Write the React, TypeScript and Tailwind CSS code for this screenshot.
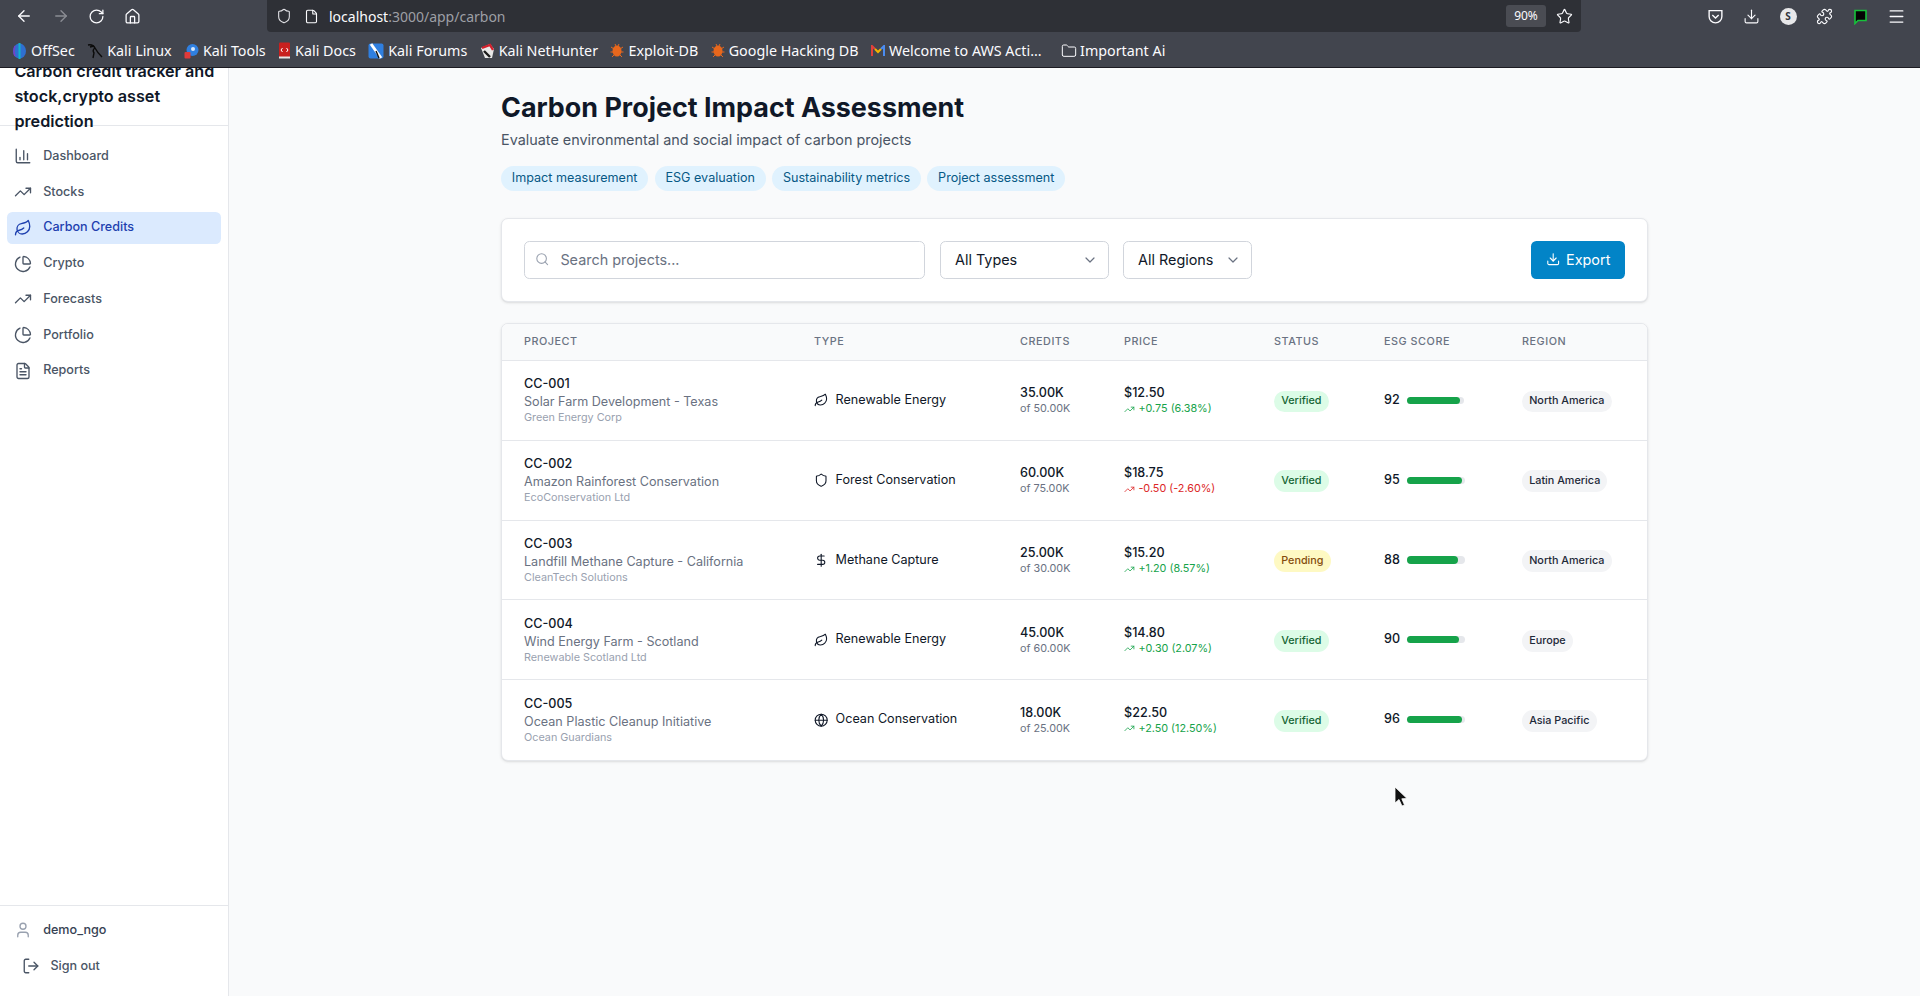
import {
  ArrowLeft,
  ArrowRight,
  ChartColumn,
  ChartPie,
  ChevronDown,
  DollarSign,
  Download,
  File,
  FileText,
  Folder,
  Globe,
  House,
  Leaf,
  LogOut,
  Menu,
  Puzzle,
  RotateCw,
  Search,
  Shield,
  Star,
  TrendingUp,
  User,
} from "lucide-react";

const navItems = [
  { label: "Dashboard", icon: ChartColumn },
  { label: "Stocks", icon: TrendingUp },
  { label: "Carbon Credits", icon: Leaf, active: true },
  { label: "Crypto", icon: ChartPie },
  { label: "Forecasts", icon: TrendingUp },
  { label: "Portfolio", icon: ChartPie },
  { label: "Reports", icon: FileText },
];

const tags = ["Impact measurement", "ESG evaluation", "Sustainability metrics", "Project assessment"];

const projects = [
  { id: "CC-001", name: "Solar Farm Development - Texas", org: "Green Energy Corp", type: "Renewable Energy", icon: Leaf, credits: "35.00K", total: "of 50.00K", price: "$12.50", change: "+0.75 (6.38%)", status: "Verified", score: 92, region: "North America" },
  { id: "CC-002", name: "Amazon Rainforest Conservation", org: "EcoConservation Ltd", type: "Forest Conservation", icon: Shield, credits: "60.00K", total: "of 75.00K", price: "$18.75", change: "-0.50 (-2.60%)", status: "Verified", score: 95, region: "Latin America" },
  { id: "CC-003", name: "Landfill Methane Capture - California", org: "CleanTech Solutions", type: "Methane Capture", icon: DollarSign, credits: "25.00K", total: "of 30.00K", price: "$15.20", change: "+1.20 (8.57%)", status: "Pending", score: 88, region: "North America" },
  { id: "CC-004", name: "Wind Energy Farm - Scotland", org: "Renewable Scotland Ltd", type: "Renewable Energy", icon: Leaf, credits: "45.00K", total: "of 60.00K", price: "$14.80", change: "+0.30 (2.07%)", status: "Verified", score: 90, region: "Europe" },
  { id: "CC-005", name: "Ocean Plastic Cleanup Initiative", org: "Ocean Guardians", type: "Ocean Conservation", icon: Globe, credits: "18.00K", total: "of 25.00K", price: "$22.50", change: "+2.50 (12.50%)", status: "Verified", score: 96, region: "Asia Pacific" },
];

const headers = ["Project", "Type", "Credits", "Price", "Status", "ESG Score", "Region"];

function Favicon({ kind }: { kind: string }) {
  if (kind === "offsec")
    return (
      <svg width="15" height="16" viewBox="0 0 15 16">
        <ellipse cx="7.5" cy="8" rx="6.5" ry="7.5" fill="#2f6fd0" />
        <rect x="6.5" y="0" width="2" height="16" fill="#12b5c9" />
        <path d="M3 3 Q1 8 3 13" stroke="#7b3fc4" strokeWidth="1.5" fill="none" />
      </svg>
    );
  if (kind === "linux")
    return (
      <svg width="16" height="16" viewBox="0 0 16 16" fill="none" stroke="#0b0b0b" strokeWidth="1.4">
        <path d="M1 2 Q6 1 8 5 Q10 9 15 14 M8 5 Q5 7 7 10 L6 15 M3 4 L7 3" />
      </svg>
    );
  if (kind === "tools")
    return (
      <svg width="15" height="16" viewBox="0 0 15 16">
        <circle cx="8.5" cy="7" r="6" fill="#2f7fe0" />
        <circle cx="9" cy="6" r="2" fill="#d9e8fb" />
        <rect x="0.5" y="9" width="6" height="6.5" rx="1" fill="#e03a3a" />
      </svg>
    );
  if (kind === "docs")
    return (
      <svg width="13" height="17" viewBox="0 0 13 17">
        <rect x="1" y="0.5" width="11" height="15" rx="1" fill="#c8201f" />
        <rect x="1" y="14.5" width="11" height="2" fill="#e6e6e6" />
        <path d="M4.5 6 L3 8 L4.5 10 M8.5 6 L10 8 L8.5 10" stroke="#fff" fill="none" />
      </svg>
    );
  if (kind === "forums")
    return (
      <svg width="16" height="16" viewBox="0 0 16 16">
        <rect x="0.5" y="0.5" width="15" height="15" rx="2" fill="#2f7fe0" />
        <path d="M3 1 L8 8 L13 15" stroke="#fff" strokeWidth="3" />
        <path d="M8 8 L11 15" stroke="#111" strokeWidth="1.4" />
      </svg>
    );
  if (kind === "hunter")
    return (
      <svg width="15" height="16" viewBox="0 0 15 16">
        <path d="M1 5 L10 1 L14 6 L12 15 L5 15 Z" fill="#e8e8e8" />
        <path d="M2 5 L10 2 L13 7" stroke="#d2202c" strokeWidth="2.4" fill="none" />
        <path d="M4 8 L10 14" stroke="#1b1b1b" strokeWidth="2.4" />
      </svg>
    );
  if (kind === "exploit")
    return (
      <svg width="14" height="15" viewBox="0 0 14 15">
        <ellipse cx="7" cy="8" rx="4.5" ry="5.5" fill="#e8671c" />
        <path d="M1 4 L4 6 M13 4 L10 6 M0.5 9 L3 9 M13.5 9 L11 9 M2 14 L4 12 M12 14 L10 12 M5 1 L6 3 M9 1 L8 3" stroke="#e8671c" strokeWidth="1" />
      </svg>
    );
  return (
    <svg width="14" height="12" viewBox="0 0 14 12">
      <path d="M1 11 V1 L4 4" stroke="#e0413a" strokeWidth="2" fill="none" />
      <path d="M4 4 L7 7 L10 4" stroke="#f4b400" strokeWidth="2" fill="none" />
      <path d="M10 4 L13 1 V11" stroke="#4b8cf0" strokeWidth="2" fill="none" />
    </svg>
  );
}

const bookmarks = [
  { label: "OffSec", kind: "offsec" },
  { label: "Kali Linux", kind: "linux" },
  { label: "Kali Tools", kind: "tools" },
  { label: "Kali Docs", kind: "docs" },
  { label: "Kali Forums", kind: "forums" },
  { label: "Kali NetHunter", kind: "hunter" },
  { label: "Exploit-DB", kind: "exploit" },
  { label: "Google Hacking DB", kind: "exploit" },
  { label: "Welcome to AWS Acti...", kind: "aws" },
];

function BrowserChrome() {
  return (
    <div className="relative z-10 h-[68px] shrink-0 border-b border-[#1c1b22] bg-[#42454e] font-['Noto_Sans',sans-serif] text-[#fbfbfe]">
      <div className="flex h-[33px] items-center">
        <div className="flex w-[267px] shrink-0 items-center gap-[18.5px] pb-[1px] pl-[15px]">
          <ArrowLeft size={18} strokeWidth={1.8} />
          <ArrowRight size={18} strokeWidth={1.8} className="text-[#8b8d94]" />
          <RotateCw size={17} strokeWidth={1.8} />
          <House size={17} strokeWidth={1.8} />
        </div>
        <div className="flex h-[32px] w-[1314px] items-center self-start rounded-b-[4px] bg-[#2e3036] pr-[5px] pl-[9px]">
          <Shield size={16} strokeWidth={1.6} className="text-[#e4e4e8]" />
          <File size={15} strokeWidth={1.8} className="ml-[12px]" />
          <span className="ml-[10px] text-[14px]">
            localhost<span className="text-[#9d9fa5]">:3000/app/carbon</span>
          </span>
          <div className="ml-auto flex h-[22px] w-[40px] items-center justify-center rounded-[3px] bg-[#4a4c53] text-[12px]">
            90%
          </div>
          <Star size={17} strokeWidth={1.6} className="mr-[3px] ml-[10px]" />
        </div>
        <div className="ml-auto flex items-center gap-[19.5px] pr-[14px]">
          <svg width="17" height="17" viewBox="0 0 16 16" fill="none" stroke="currentColor" strokeWidth="1.3">
            <path d="M2 2.5 H14 V8 A6 6 0 0 1 2 8 Z" />
            <path d="M5 6.5 L8 9.5 L11 6.5" />
          </svg>
          <Download size={17} strokeWidth={1.6} />
          <div className="flex h-[17px] w-[17px] items-center justify-center rounded-full bg-[#e8e8ea] text-[10px] font-bold text-[#33353b]">
            S
          </div>
          <Puzzle size={17} strokeWidth={1.6} />
          <svg width="15" height="16" viewBox="0 0 15 16">
            <path d="M2 1.5 H13 V11.5 H5 L2 14.5 Z" fill="#050505" stroke="#16c23a" strokeWidth="1.6" />
          </svg>
          <Menu size={19} strokeWidth={1.6} />
        </div>
      </div>
      <div className="flex h-[35px] items-center gap-[12.4px] pl-[12px] text-[14.3px]">
        {bookmarks.map((b) => (
          <div key={b.label} className="flex items-center gap-[4px] whitespace-nowrap">
            <Favicon kind={b.kind} />
            <span>{b.label}</span>
          </div>
        ))}
        <div className="ml-[7px] flex items-center gap-[3px] whitespace-nowrap">
          <Folder size={16} strokeWidth={1.5} />
          <span>Important Ai</span>
        </div>
      </div>
    </div>
  );
}

function Sidebar() {
  return (
    <aside className="flex w-[229px] shrink-0 flex-col border-r border-gray-200 bg-white">
      <div className="flex h-[57.6px] shrink-0 items-center border-b border-gray-200 pr-[8px] pl-[14.4px]">
        <h2 className="text-[16.2px] leading-[25.2px] font-semibold text-gray-900">
          Carbon credit tracker and stock,crypto asset prediction
        </h2>
      </div>
      <nav className="flex flex-col gap-[3.4px] px-[7.2px] pt-[14.4px]">
        {navItems.map((item) => (
          <a
            key={item.label}
            className={
              item.active
                ? "flex h-[32.4px] items-center gap-[10.8px] rounded-[5.4px] bg-[#dbeafe] px-[7.2px] text-[12.6px] font-medium text-[#1e40af]"
                : "flex h-[32.4px] items-center gap-[10.8px] rounded-[5.4px] px-[7.2px] text-[12.6px] font-medium text-gray-600"
            }
          >
            <item.icon size={18} strokeWidth={1.8} className={item.active ? "text-[#1e40af]" : "text-gray-600"} />
            {item.label}
          </a>
        ))}
      </nav>
      <div className="mt-auto border-t border-gray-200 px-[14.4px] pt-[14px] pb-[18.8px]">
        <div className="flex h-[21.6px] items-center gap-[10.8px] text-[12.6px] font-medium text-gray-700">
          <User size={18} strokeWidth={1.8} className="text-gray-400" />
          demo_ngo
        </div>
        <button className="mt-[14.4px] flex h-[21.6px] items-center gap-[10.8px] pl-[7.2px] text-[12.6px] font-medium text-gray-600">
          <LogOut size={18} strokeWidth={1.8} />
          Sign out
        </button>
      </div>
    </aside>
  );
}

function Filters() {
  return (
    <div className="mt-[26.8px] flex h-[84px] items-center rounded-[7px] border border-gray-200 bg-white px-[22px] shadow-sm">
      <div className="flex h-[38px] w-[401px] items-center gap-[11px] rounded-[5.4px] border border-gray-300 bg-white pr-[12px] pl-[10px]">
        <Search size={14.4} strokeWidth={1.8} className="text-gray-400" />
        <span className="text-[14.4px] text-gray-500">Search projects...</span>
      </div>
      <div className="ml-[15px] flex h-[38px] w-[169px] items-center justify-between rounded-[5.4px] border border-gray-300 bg-white pr-[10px] pl-[14px] text-[14.4px] text-gray-900">
        All Types
        <ChevronDown size={16} strokeWidth={1.8} className="text-gray-500" />
      </div>
      <div className="ml-[14px] flex h-[38px] w-[129px] items-center justify-between rounded-[5.4px] border border-gray-300 bg-white pr-[10px] pl-[14px] text-[14.4px] text-gray-900">
        All Regions
        <ChevronDown size={16} strokeWidth={1.8} className="text-gray-500" />
      </div>
      <button className="ml-auto flex h-[38px] w-[94px] items-center justify-center gap-[6px] rounded-[5.4px] bg-[#0284c7] text-[14.4px] text-white">
        <Download size={14.4} strokeWidth={1.8} />
        Export
      </button>
    </div>
  );
}

function ProjectsTable() {
  return (
    <div className="mt-[21px] overflow-hidden rounded-[7px] border border-gray-200 bg-white shadow-sm">
      <table className="w-full table-fixed border-collapse">
        <colgroup>
          <col className="w-[312px]" />
          <col className="w-[206px]" />
          <col className="w-[104px]" />
          <col className="w-[150px]" />
          <col className="w-[110px]" />
          <col className="w-[138px]" />
          <col />
        </colgroup>
        <thead>
          <tr className="h-[37px] border-b border-gray-200 bg-gray-50">
            {headers.map((h, i) => (
              <th
                key={h}
                className={
                  i === 0
                    ? "pl-[22px] text-left text-[10.8px] font-medium tracking-wider text-gray-500 uppercase"
                    : "text-left text-[10.8px] font-medium tracking-wider text-gray-500 uppercase"
                }
              >
                {h}
              </th>
            ))}
          </tr>
        </thead>
        <tbody>
          {projects.map((p, i) => (
            <tr key={p.id} className={i < projects.length - 1 ? "h-[79.8px] border-b border-gray-200" : "h-[79.8px]"}>
              <td className="pl-[22px] align-middle">
                <div className="text-[12.6px] leading-[18px] font-medium text-gray-900">{p.id}</div>
                <div className="text-[12.6px] leading-[18px] text-gray-500">{p.name}</div>
                <div className="text-[10.8px] leading-[14.4px] text-gray-400">{p.org}</div>
              </td>
              <td className="align-middle">
                <div className="flex items-center gap-[7.2px] text-[12.6px] text-gray-900">
                  <p.icon size={14.4} strokeWidth={1.8} />
                  {p.type}
                </div>
              </td>
              <td className="align-middle">
                <div className="text-[12.6px] leading-[18px] font-medium text-gray-900">{p.credits}</div>
                <div className="text-[10.8px] leading-[14.4px] text-gray-500">{p.total}</div>
              </td>
              <td className="align-middle">
                <div className="text-[12.6px] leading-[18px] font-medium text-gray-900">{p.price}</div>
                <div
                  className={
                    p.change.startsWith("-")
                      ? "flex items-center gap-[3.6px] text-[10.8px] leading-[14.4px] text-[#dc2626]"
                      : "flex items-center gap-[3.6px] text-[10.8px] leading-[14.4px] text-[#16a34a]"
                  }
                >
                  <TrendingUp size={10.8} strokeWidth={1.8} />
                  {p.change}
                </div>
              </td>
              <td className="align-middle">
                <span
                  className={
                    p.status === "Verified"
                      ? "mt-[2px] block w-fit rounded-full bg-[#dcfce7] px-[7.2px] py-[1.8px] text-[10.8px] leading-[18px] font-medium text-[#166534]"
                      : "mt-[2px] block w-fit rounded-full bg-[#fef9c3] px-[7.2px] py-[1.8px] text-[10.8px] leading-[18px] font-medium text-[#854d0e]"
                  }
                >
                  {p.status}
                </span>
              </td>
              <td className="align-middle">
                <div className="flex items-center gap-[7.2px]">
                  <span className="text-[12.6px] font-medium text-gray-900">{p.score}</span>
                  <div className="h-[7.2px] w-[57.6px] rounded-full bg-gray-200">
                    <div className="h-full rounded-full bg-[#16a34a]" style={{ width: `${p.score}%` }} />
                  </div>
                </div>
              </td>
              <td className="align-middle">
                <span className="mt-[2px] block w-fit rounded-full bg-gray-100 px-[7.2px] py-[1.8px] text-[10.8px] leading-[18px] font-medium text-gray-800">
                  {p.region}
                </span>
              </td>
            </tr>
          ))}
        </tbody>
      </table>
    </div>
  );
}

export default function App() {
  return (
    <div className="relative flex h-[996px] flex-col overflow-hidden bg-gray-50 font-['Inter',sans-serif]">
      <BrowserChrome />
      <div className="flex min-h-0 flex-1">
        <Sidebar />
        <main className="flex-1">
          <div className="mx-auto w-[1147px] pt-[20.6px]">
            <h1 className="text-[26.9px] leading-[36px] font-bold text-gray-900">Carbon Project Impact Assessment</h1>
            <p className="mt-[4.8px] text-[14.4px] leading-[21.6px] text-gray-600">
              Evaluate environmental and social impact of carbon projects
            </p>
            <div className="mt-[14.6px] flex gap-[6.4px]">
              {tags.map((t) => (
                <span key={t} className="rounded-full bg-[#e0f2fe] px-[10.8px] py-[3.6px] text-[12.6px] leading-[18px] font-normal text-[#075985]">
                  {t}
                </span>
              ))}
            </div>
            <Filters />
            <ProjectsTable />
          </div>
        </main>
      </div>
      {/* mouse pointer caught in the screenshot */}
      <svg className="absolute top-[786px] left-[1394px]" width="14" height="22" viewBox="0 0 14 22">
        <path d="M1 1 V17 L5 13.5 L8 20 L10.5 19 L7.8 12.8 L13 12.5 Z" fill="#111" stroke="#fff" strokeWidth="0.8" />
      </svg>
    </div>
  );
}
